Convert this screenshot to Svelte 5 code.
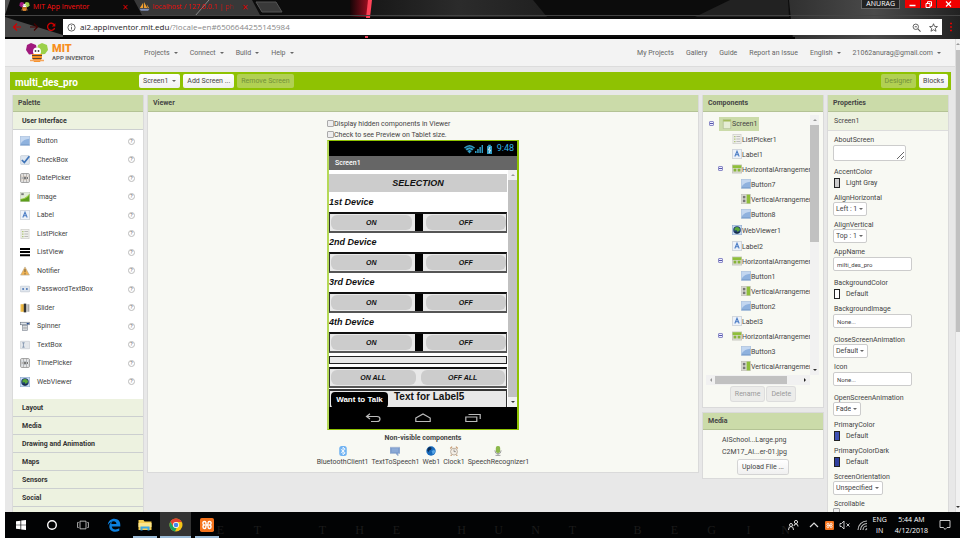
<script>
  const menus = ['Projects', 'Connect', 'Build', 'Help'];
  const links = ['My Projects', 'Gallery', 'Guide', 'Report an Issue'];
  const palette = [
    ['button', 'Button'], ['check', 'CheckBox'], ['date', 'DatePicker'], ['image', 'Image'],
    ['label', 'Label'], ['list', 'ListPicker'], ['listview', 'ListView'], ['notifier', 'Notifier'],
    ['password', 'PasswordTextBox'], ['slider', 'Slider'], ['spinner', 'Spinner'],
    ['textbox', 'TextBox'], ['time', 'TimePicker'], ['web', 'WebViewer']
  ];
  const drawers = ['Layout', 'Media', 'Drawing and Animation', 'Maps', 'Sensors', 'Social'];
  const tree = [
    ['list', 'ListPicker1', 1], ['label', 'Label1', 1], ['horiz', 'HorizontalArrangement1', 1, true],
    ['button', 'Button7', 2], ['vert', 'VerticalArrangement1', 2], ['button', 'Button8', 2],
    ['web', 'WebViewer1', 1], ['label', 'Label2', 1], ['horiz', 'HorizontalArrangement2', 1, true],
    ['button', 'Button1', 2], ['vert', 'VerticalArrangement2', 2], ['button', 'Button2', 2],
    ['label', 'Label3', 1], ['horiz', 'HorizontalArrangement3', 1, true],
    ['button', 'Button3', 2], ['vert', 'VerticalArrangement3', 2], ['button', '', 2]
  ];
  const props = [
    { name: 'AboutScreen', kind: 'area' },
    { name: 'AccentColor', kind: 'color', value: 'Light Gray', color: '#cccccc' },
    { name: 'AlignHorizontal', kind: 'select', value: 'Left : 1' },
    { name: 'AlignVertical', kind: 'select', value: 'Top : 1' },
    { name: 'AppName', kind: 'input', value: 'milti_des_pro' },
    { name: 'BackgroundColor', kind: 'color', value: 'Default', color: '#ffffff' },
    { name: 'BackgroundImage', kind: 'input', value: 'None...' },
    { name: 'CloseScreenAnimation', kind: 'select', value: 'Default' },
    { name: 'Icon', kind: 'input', value: 'None...' },
    { name: 'OpenScreenAnimation', kind: 'select', value: 'Fade' },
    { name: 'PrimaryColor', kind: 'color', value: 'Default', color: '#3f51b5' },
    { name: 'PrimaryColorDark', kind: 'color', value: 'Default', color: '#303f9f' },
    { name: 'ScreenOrientation', kind: 'select', value: 'Unspecified' },
    { name: 'Scrollable', kind: 'check' }
  ];
  const devices = ['1st Device', '2nd Device', '3rd Device', '4th Device'];
  const hidden = [
    ['bluetooth', 'BluetoothClient1'], ['speech', 'TextToSpeech1'], ['globe', 'Web1'],
    ['clock', 'Clock1'], ['mic', 'SpeechRecognizer1']
  ];
  const motto = 'ET THE HUNT BEGIN'.split('');
</script>

{#snippet icon(name)}
  <svg class="icon" viewBox="0 0 16 16" aria-hidden="true">
    {#if name === 'button'}
      <rect x=".5" y="1" width="15" height="14" fill="#8fb2de" stroke="#a9bfdc" />
      <path d="M1 1.5h14v3Q6 5 1 12z" fill="#c3d7f0" />
      <path d="M1 14h14" stroke="#6e93c4" />
    {:else if name === 'check'}
      <rect x="1" y="1" width="14" height="14" rx="1" fill="#dfe7f0" stroke="#b9c3cf" />
      <path d="M3 8l4 4 8-10" fill="none" stroke="#3f74b8" stroke-width="2.8" />
    {:else if name === 'date' || name === 'time'}
      <rect x="1" y="1" width="14" height="14" rx="1.5" fill="#eeeeee" stroke="#8c8c8c" stroke-width="1.4" />
      <path d="M5.5 1v14M10.500 1v14" stroke="#999" />
      <path d="M2 5h12M2 11h12" stroke={name === 'date' ? '#c0a080' : '#9ab'} stroke-dasharray="2 1.500" />
      <path d="M2.500 8h2M7 6.500h2v3H7zM12 6.500v3" fill="none" stroke="#555" stroke-width="1.300" />
    {:else if name === 'image'}
      <rect x=".5" y="1" width="15" height="14" fill="#e3edd8" stroke="#c5cdbd" />
      <path d="M1 15V11Q9 11 15 3v12z" fill="#5d9e1c" />
      <path d="M1 12Q9 12 15 5V3Q9 10 1 11z" fill="#a5d34d" />
      <rect x="2" y="2" width="4" height="3" fill="#777" />
    {:else if name === 'label'}
      <rect x=".5" y=".5" width="15" height="15" rx="1" fill="#edf2f9" stroke="#b6bcc6" />
      <path d="M4.500 12L8 3.500 11.500 12M5.800 9.200h4.400" fill="none" stroke="#4a7cc4" stroke-width="1.700" />
    {:else if name === 'list'}
      <rect x="1.500" y=".5" width="13" height="15" fill="#efefec" stroke="#c9c9c5" />
      <path d="M3.500 4h2M3.500 8h2M3.500 12h2" stroke="#a3bd62" stroke-width="2" />
      <path d="M7 4h6M7 8h6M7 12h6" stroke="#aaa" stroke-width="1.200" />
    {:else if name === 'listview'}
      <path d="M0 3h16M0 8h16M0 13h16" stroke="#000" stroke-width="3.200" />
    {:else if name === 'notifier'}
      <path d="M8 1.500L15 14.500H1z" fill="#f2b454" stroke="#b9aa90" />
      <path d="M8 5v5M8 11.500v2" stroke="#6b5a3c" stroke-width="1.600" />
    {:else if name === 'password'}
      <rect x=".5" y="3.500" width="15" height="9" rx="1" fill="#e0e6ee" stroke="#bcc4cf" />
      <circle cx="5" cy="8" r="1.600" fill="#4f78b5" /><circle cx="11" cy="8" r="1.600" fill="#4f78b5" />
    {:else if name === 'slider'}
      <rect x="1" y="2" width="5" height="12" fill="#e7a91c" />
      <rect x="6" y="1" width="4" height="14" fill="#333" />
      <rect x="10" y="2" width="5" height="12" fill="#aaa" />
      <path d="M3 2v12M12 2v12" stroke="#ffffff88" />
    {:else if name === 'spinner'}
      <rect x="1" y="2" width="14" height="4" fill="#dde3ea" stroke="#6a7480" />
      <rect x="4" y="7" width="8" height="8" fill="#e6eaee" stroke="#7a828c" />
      <path d="M10 3h5l-2.500 3z" fill="#244a90" /><path d="M5 10h6M5 12.500h6" stroke="#888" />
    {:else if name === 'textbox'}
      <rect x=".5" y="2" width="15" height="12" rx="1" fill="#e4e7eb" stroke="#c2c7ce" />
      <path d="M3.500 4.500h4M3.500 11.500h4M5.500 4.500v7" stroke="#5f7898" />
    {:else if name === 'web'}
      <rect x=".5" y=".5" width="15" height="15" fill="#c8dcf3" stroke="#8faacc" />
      <circle cx="8" cy="8" r="6" fill="#1d3d70" />
      <path d="M4 5q4-4 8 0l1 3-4 3-2-3-3 1z" fill="#59a83a" />
      <path d="M5 12q3 2 6 0" stroke="#111" fill="none" />
    {:else if name === 'horiz'}
      <rect x=".5" y="1.500" width="15" height="13" fill="#dcdcd4" stroke="#bdbdb4" />
      <rect x="1" y="2" width="14" height="4.500" fill="#8fbf3a" />
      <rect x="2.500" y="7.500" width="4.500" height="4.500" fill="#87b438" /><rect x="9" y="7.500" width="4.500" height="4.500" fill="#87b438" />
    {:else if name === 'vert'}
      <rect x="1" y=".5" width="14" height="15" fill="#dcdcd4" stroke="#bdbdb4" />
      <rect x="9" y="1" width="5.500" height="14" fill="#8fbf3a" />
      <rect x="3" y="3" width="4" height="4" fill="#777" /><rect x="3" y="9" width="4" height="4" fill="#777" />
    {:else if name === 'screen'}
      <rect x="2" y=".5" width="12" height="15" rx="1" fill="#e6edd5" stroke="#a9b78a" />
      <rect x="2" y="1" width="12" height="3" fill="#a3bb5b" />
    {:else if name === 'bluetooth'}
      <rect x="2" y="0" width="12" height="16" rx="4" fill="#6fb2f2" />
      <path d="M4.500 5l7 6L8 14V2l3.500 3-7 6" fill="none" stroke="#fff" stroke-width="1.400" />
    {:else if name === 'speech'}
      <path d="M0 2h16v10h-3v4l-4-4H0z" fill="#7f9fcf" stroke="#a8b8d0" />
      <path d="M3 5h10M3 8h10" stroke="#a9c0e4" />
    {:else if name === 'globe'}
      <circle cx="8" cy="8" r="7.500" fill="#1769bb" />
      <path d="M3 3q4-3 6 0l-1 3-3 1-1 3-2-3z" fill="#0b2d56" /><path d="M9 8l4-2 2 3-4 5z" fill="#59a6e6" />
    {:else if name === 'clock'}
      <circle cx="8" cy="9" r="5.500" fill="#f4eee5" stroke="#b8aa9a" stroke-width="1.500" />
      <path d="M2 4l3-3M11 1l3 3M4 14l-1 2M12 14l1 2" stroke="#c79b73" stroke-width="2" />
      <path d="M8 5.500V9h3" fill="none" stroke="#666" />
    {:else if name === 'mic'}
      <rect x="4.500" y="0" width="7" height="11" rx="3" fill="#8cb84b" />
      <path d="M3 7q0 5.500 5 5.500t5-5.500M8 12v3M4 15h8" fill="none" stroke="#999" stroke-width="1.500" />
    {/if}
  </svg>
{/snippet}

{#snippet bee()}
  <svg viewBox="0 0 24 22" aria-hidden="true">
    <path d="M6 1l5 2 1 5-3 4-5 .5L1 8l1-5z" fill="#a0197d" />
    <path d="M17 1l5 2 1 5-3 4-5 .5L12 8l1-5z" fill="#9bd04a" />
    <circle cx="12" cy="9.500" r="4" fill="#fff" />
    <circle cx="10.500" cy="9" r=".9" fill="#444" /><circle cx="13.500" cy="9" r=".9" fill="#444" />
    <path d="M7 12h10v4l-2 4h-6l-2-4z" fill="#f78f1e" />
    <path d="M7 13.500h10M7.500 16.500h9" stroke="#5a4634" stroke-width="1.100" />
    <path d="M5 18.500l14 0" stroke="#f5a55c" stroke-width="1.500" />
  </svg>
{/snippet}

{#snippet xampp()}
  <svg class="xampp" viewBox="0 0 16 16" aria-hidden="true">
    <rect width="16" height="16" rx="2" fill="#f5731c" />
    <path d="M5.500 8C2.500 8 2.800 4 5 4S6.800 5.500 6.800 8 7 12 5 12 2.500 8 5.500 8zM10.500 8C13.500 8 13.200 4 11 4S9.200 5.500 9.200 8 9 12 11 12 13.500 8 10.500 8zM6.500 8h3" fill="none" stroke="#fff" stroke-width="1.600" />
  </svg>
{/snippet}

<div class="desktop">
  <div class="browser">
    <svg class="theme" viewBox="0 0 955 39" preserveAspectRatio="none" aria-hidden="true">
      <defs>
        <linearGradient id="glow"><stop offset="0" stop-color="#120506" /><stop offset="1" stop-color="#a80f22" /></linearGradient>
        <linearGradient id="steel"><stop offset="0" stop-color="#181818" /><stop offset=".5" stop-color="#2b2b2b" /><stop offset="1" stop-color="#202020" /></linearGradient>
        <linearGradient id="right"><stop offset="0" stop-color="#303030" /><stop offset=".5" stop-color="#4a4a4a" /><stop offset="1" stop-color="#222" /></linearGradient>
      </defs>
      <rect width="955" height="39" fill="#0c0c0c" />
      <path d="M345 0h20v17h-20z" fill="url(#glow)" />
      <path d="M366 0h162l14 17H366z" fill="url(#steel)" />
      <path d="M725 0h58l1 17H690z" fill="#222" />
      <path d="M784 0h171v39H788z" fill="url(#right)" />
      <path d="M363 0h4l-2 18h-4z" fill="#ff4358" />
      <path d="M0 17l58 18v4H0z" fill="#4a4a4a" />
      <path d="M0 0h5L0 15z" fill="#555" />
      <path d="M129 0h118l8 15H137z" fill="#383838" />
      <path d="M204 0L190 16" stroke="#888" />
      <path d="M251 2h20l6 10h-20z" fill="#393939" stroke="#555" />
      <path d="M0 15.500h955" stroke="#444" />
      <path d="M0 38h790" stroke="#000" stroke-width="2" />
      <path d="M360 36h3v2h-3z" fill="#e8445a" />
    </svg>
    <div class="tabs">
      <div class="tab first">
        <span class="fav">{@render bee()}</span><span class="title">MIT App Inventor</span>
        <button aria-label="Close tab">×</button>
      </div>
      <div class="tab">
        <span class="fav"><svg viewBox="0 0 24 22" aria-hidden="true"><path d="M2 14L9 3v11zM11 14V1l7 13zM19 14l-2-8 5 8z" fill="#f0a030" /><path d="M1 16h22l-3 4H4z" fill="#8090b8" /></svg></span>
        <span class="title faded">localhost / 127.0.0.1 | ph</span>
        <button aria-label="Close tab">×</button>
      </div>
      <div class="controls">
        <span class="user">ANURAG</span>
        <button aria-label="Minimize"><svg viewBox="0 0 14 7"><path d="M4 4.500h6" stroke="#fff" stroke-width="1.500" /></svg></button>
        <button aria-label="Restore"><svg viewBox="0 0 14 7"><path d="M4.500 2.500h4v4h-4zM6 2.500V.7h4V5H8.500" fill="none" stroke="#fff" /></svg></button>
        <button class="close" aria-label="Close"><svg viewBox="0 0 14 7"><path d="M4.500.5l5 5M9.500.5l-5 5" stroke="#fff" stroke-width="1.200" /></svg></button>
      </div>
    </div>
    <div class="toolbar">
      <button class="nav" aria-label="Back"><svg viewBox="0 0 10 10"><path d="M9 5H1.500M5 1.500L1.500 5 5 8.500" fill="none" stroke="#d00000" stroke-width="1.200" /></svg></button>
      <button class="nav dim" aria-label="Forward"><svg viewBox="0 0 10 10"><path d="M1 5h7.500M5 1.500L8.500 5 5 8.500" fill="none" stroke="#400" stroke-width="1.200" /></svg></button>
      <button class="nav" aria-label="Reload"><svg viewBox="0 0 10 10"><path d="M8.300 3A3.600 3.600 0 1 0 8.600 6" fill="none" stroke="#d00000" stroke-width="1.300" /><path d="M9.300 1v3.500H5.800z" fill="#d00000" /></svg></button>
      <div class="omnibox">
        <svg viewBox="0 0 10 10"><circle cx="5" cy="5" r="4" fill="none" stroke="#555" /><path d="M5 4.300v3M5 2.500v1" stroke="#555" /></svg>
        <span class="url">ai2.appinventor.mit.edu<span>/?locale=en#6506644255145984</span></span>
        <svg viewBox="0 0 10 10"><circle cx="4.200" cy="4.200" r="3" fill="none" stroke="#555" /><path d="M6.500 6.500L9.500 9.500M3 4.200h2.400" stroke="#555" stroke-width="1.200" /></svg>
        <svg viewBox="0 0 10 10"><path d="M5 .8l1.200 3 3.200.2L7 6l.8 3.200L5 7.500 2.200 9.200 3 6 .6 4l3.200-.2z" fill="none" stroke="#444" stroke-width=".9" /></svg>
      </div>
      <button class="more" aria-label="Menu"><svg viewBox="0 0 4 10"><path d="M1 1.500h2M1 5h2M1 8.500h2" stroke="#e00000" stroke-width="1.500" /></svg></button>
    </div>
  </div>

  <div class="page">
    <div class="site">
      <header>
        <a class="logo" href="#home">{@render bee()}<span><b>MIT</b><small>APP INVENTOR</small></span></a>
        <nav class="menus">
          {#each menus as m}<a href="#menu">{m}<i class="caret"></i></a>{/each}
        </nav>
        <nav class="account">
          {#each links as l}<a href="#link">{l}</a>{/each}
          <a href="#lang">English<i class="caret"></i></a>
          <a href="#me">21062anurag@gmail.com<i class="caret"></i></a>
        </nav>
      </header>

      <div class="projectbar">
        <h1>multi_des_pro</h1>
        <button>Screen1<i class="caret"></i></button>
        <button>Add Screen ...</button>
        <button disabled>Remove Screen</button>
        <span class="grow"></span>
        <button disabled>Designer</button>
        <button>Blocks</button>
      </div>

      <main>
        <section class="panel palette">
          <h2>Palette</h2>
          <h3>User Interface</h3>
          <ul>
            {#each palette as [ic, name]}
              <li>{@render icon(ic)}<span>{name}</span><button class="help" aria-label="Help">?</button></li>
            {/each}
          </ul>
          {#each drawers as d}<h3>{d}</h3>{/each}
          <div class="drawer-end"></div>
        </section>

        <section class="panel viewer">
          <h2>Viewer</h2>
          <div class="stage">
            <div class="options">
              <label><input type="checkbox" />Display hidden components in Viewer</label>
              <label><input type="checkbox" />Check to see Preview on Tablet size.</label>
            </div>
            <div class="phone">
              <div class="status">
                <svg viewBox="0 0 30 10" aria-hidden="true">
                  <path d="M0 3.500Q5.500-1.500 11 3.500L5.500 9.500z" fill="#2f9cc5" />
                  <path d="M1 5Q5.500 1 10 5M2.500 7Q5.500 4 8.500 7" fill="none" stroke="#000" stroke-width=".7" />
                  <path d="M11 9h1.500V7H11zM13.200 9h1.500V5h-1.500zM15.400 9h1.500V3h-1.500zM17.600 9H19V1h-1.400z" fill="#2f9cc5" />
                  <path d="M23 2h1.200V.8h2.600V2H28v8h-5z" fill="#2f9cc5" /><path d="M26 3l-1.500 3h2L25 9" fill="none" stroke="#fff" stroke-width=".8" />
                </svg>
                <span>9:48</span>
              </div>
              <div class="apptitle">Screen1</div>
              <div class="screen">
                <div class="app">
                  <button class="wide">SELECTION</button>
                  {#each devices as d}
                    <p>{d}</p>
                    <div class="pair"><button>ON</button><i></i><button>OFF</button></div>
                  {/each}
                  <div class="thin"></div>
                  <div class="pair all"><button>ON ALL</button><button>OFF ALL</button></div>
                  <div class="talk"><button>Want to Talk</button><span>Text for Label5</span></div>
                </div>
                <div class="vscroll"><i class="up"></i><b></b><i class="down"></i></div>
              </div>
              <div class="softkeys">
                <svg viewBox="0 0 16 10"><path d="M5 .8L1.500 3.500 5 6M1.500 3.500H12q3 0 3 2.500T12 8.500H6" fill="none" stroke="#bbb" stroke-width="1.200" /></svg>
                <svg viewBox="0 0 16 10"><path d="M.8 5L8 1l7.200 4v3.500H.8z" fill="none" stroke="#bbb" stroke-width="1.200" /></svg>
                <svg viewBox="0 0 16 10"><path d="M.8 4h11v4.500H.8zM3.500 1.500h11.700v4.500" fill="none" stroke="#bbb" stroke-width="1.200" /></svg>
              </div>
            </div>
            <h4>Non-visible components</h4>
            <div class="hidden">
              {#each hidden as [ic, name]}<span>{@render icon(ic)}{name}</span>{/each}
            </div>
          </div>
        </section>

        <div class="stack">
          <section class="panel">
            <h2>Components</h2>
            <div class="treebox">
              <div class="tree">
                <div class="node root"><i class="fold"></i><span class="chosen">{@render icon('screen')}Screen1</span></div>
                {#each tree as [ic, name, depth, fold]}
                  <div class={['node', `d${depth}`, ic === 'web' && 'tall']}>
                    {#if fold}<i class="fold"></i>{/if}{@render icon(ic)}<span>{name}</span>
                  </div>
                {/each}
              </div>
              <div class="vscroll"><i class="up"></i><b></b><i class="down"></i></div>
              <div class="hscroll"><i class="left"></i><b></b><i class="right"></i></div>
            </div>
            <div class="actions"><button disabled>Rename</button><button disabled>Delete</button></div>
          </section>
          <section class="panel media">
            <h2>Media</h2>
            <a href="#large">AISchool...Large.png</a>
            <a href="#er">C2M17_AI...er-01.jpg</a>
            <div class="actions"><button>Upload File ...</button></div>
          </section>
        </div>

        <section class="panel properties">
          <h2>Properties</h2>
          <div class="subject">Screen1</div>
          <div class="fields">
            {#each props as p}
              <div class={['field', p.kind]}>
                <label for={p.name}>{p.name}</label>
                {#if p.kind === 'area'}
                  <textarea id={p.name}></textarea>
                {:else if p.kind === 'color'}
                  <button id={p.name}><i style="background:{p.color}"></i>{p.value}</button>
                {:else if p.kind === 'select'}
                  <span class="pick"><select id={p.name}><option>{p.value}</option></select><i class="caret"></i></span>
                {:else if p.kind === 'input'}
                  <input id={p.name} value={p.value} />
                {:else}
                  <input id={p.name} type="checkbox" checked />
                {/if}
              </div>
            {/each}
          </div>
        </section>
      </main>
    </div>
    <div class="vscroll pagescroll"><i class="up"></i><b></b><i class="down"></i></div>
  </div>

  <footer>
    <div class="motto" aria-hidden="true">{#each motto as ch}<span class:space={ch === ' '}>{ch}</span>{/each}</div>
    <button aria-label="Start"><svg viewBox="0 0 12 12"><path d="M1 2.300l4.500-.6v4H1zM6.200 1.600L11 1v4.700H6.200zM1 6.300h4.500v4L1 9.700zM6.200 6.300H11V11l-4.800-.6z" fill="#fff" /></svg></button>
    <button aria-label="Cortana"><svg viewBox="0 0 12 12"><circle cx="6" cy="6" r="4.300" fill="none" stroke="#fff" stroke-width="1.400" /></svg></button>
    <button aria-label="Task view"><svg viewBox="0 0 14 12"><path d="M3.500 1.500h7v9h-7zM2 3H.7v6H2M12 3h1.300v6H12" fill="none" stroke="#ccc" /></svg></button>
    <button aria-label="Edge"><svg class="big" viewBox="0 0 14 14"><path d="M.8 7C1.200 3 4 .8 7.300.8c4 0 6 2.800 6 6.200v1.500H4.800c.2 3.500 4.700 3.500 7.500 1.800v2.500c-4 2-10 1-10-4.300 0-2.500 1.200-4 2.900-4.800-.7.900-.8 2-.8 2.300h5C9.500 2 4 2.500.8 7z" fill="#0c80df" /></svg></button>
    <button class="open" aria-label="File Explorer"><svg class="big" viewBox="0 0 14 14"><path d="M.5 2h5l1 1.500h7v8.500H.5z" fill="#f6cf52" /><path d="M.5 5h13v4H.5z" fill="#fde58b" /><path d="M2.500 12.500V8.500h9v4h-2v-2h-5v2z" fill="#3ba7e5" /></svg></button>
    <button class="open active" aria-label="Chrome"><svg class="big" viewBox="0 0 14 14"><circle cx="7" cy="7" r="6.500" fill="#f6c417" /><path d="M1.400 3.700A6.500 6.500 0 0 1 12.700 4H7L4 8z" fill="#df4132" /><path d="M1.400 3.700L4.500 9 7.500 10 6 13.400A6.500 6.500 0 0 1 1.400 3.700z" fill="#1aa15f" /><circle cx="7" cy="7" r="3" fill="#fff" /><circle cx="7" cy="7" r="2.300" fill="#4485ec" /></svg></button>
    <button class="open" aria-label="XAMPP">{@render xampp()}</button>
    <div class="tray">
      <svg viewBox="0 0 12 12"><circle cx="4" cy="6" r="1.500" fill="none" stroke="#ddd" /><path d="M1.500 11q0-3.500 2.500-3.500T6.500 11M7 7q0-2 2-2t2 2.500" fill="none" stroke="#ddd" /><circle cx="9" cy="3" r="1.600" fill="none" stroke="#ddd" /></svg>
      <svg class="chev" viewBox="0 0 12 12"><path d="M2 8l4-4 4 4" fill="none" stroke="#ddd" stroke-width="1.200" /></svg>
      {@render xampp()}
      <svg viewBox="0 0 12 12"><path d="M1 4.500h1.500L5 2v8L2.500 7.500H1zM7.500 4.500l3 3M10.500 4.500l-3 3" fill="none" stroke="#ddd" stroke-width=".9" /></svg>
      <svg viewBox="0 0 12 12"><path d="M2 11A9 9 0 0 1 11 2M4.500 11A6.500 6.500 0 0 1 11 4.500M7 11A4 4 0 0 1 11 7M9.500 11L11 9.500" fill="none" stroke="#bbb" stroke-width="1.100" /></svg>
      <span>ENG<br />IN</span>
      <span class="time">5:44 AM<br />4/12/2018</span>
      <svg class="note" viewBox="0 0 12 12"><path d="M1 1.500h10v7H8L6 10.500 4.500 8.500H1z" fill="none" stroke="#ddd" stroke-width=".9" /></svg>
    </div>
  </footer>
</div>

<style>
  :global(body) { background: #fff; overflow: hidden; }
  .desktop { box-sizing: border-box; height: 100vh; padding: 0 0 2px 5px; display: flex; flex-direction: column; font: 7px/10px Roboto, "Liberation Sans", sans-serif; color: #444; }
  .desktop :is(button, input, select, textarea) { font: inherit; color: inherit; margin: 0; padding: 0; box-sizing: border-box; }
  .desktop button { border: 0; background: none; white-space: nowrap; }
  .desktop a { color: inherit; text-decoration: none; white-space: nowrap; }
  svg { display: block; flex: none; }
  h1, h2, h3, h4, p, ul { margin: 0; padding: 0; list-style: none; font-size: inherit; }
  .icon { width: 10px; height: 10px; }
  .caret { display: inline-block; width: 0; border: 2px solid transparent; border-top-color: #666; border-bottom: 0; margin-left: 4px; vertical-align: middle; }

  .browser { position: relative; height: 39px; flex: none; font-family: "Open Sans", sans-serif; }
  .theme { position: absolute; inset: 0; width: 100%; height: 100%; }
  .tabs { position: relative; display: flex; height: 16px; }
  .tab { display: flex; align-items: center; height: 13px; width: 121px; padding-left: 2px; box-sizing: border-box; color: #ff1010; }
  .tab.first { width: 132px; padding-left: 14px; }
  .tab .title { width: 86px; overflow: hidden; white-space: nowrap; }
  .faded { mask-image: linear-gradient(90deg, #000 80%, transparent); }
  .fav svg { width: 11px; height: 11px; }
  .fav { width: 14px; }
  .tab button { font-size: 10px; color: #d00; width: 12px; }
  .controls { margin-left: auto; display: flex; gap: 1px; align-items: flex-start; }
  .user { color: #fff; height: 9px; line-height: 8px; border: 1px solid #666; border-top: 0; box-sizing: border-box; background: #222; padding: 0 4px; margin-right: 4px; }
  .controls button { background: #f00000; width: 15px; height: 8px; }
  .controls svg { width: 100%; height: 7px; }
  .controls .close { width: 23px; }
  .toolbar { position: relative; display: flex; align-items: center; height: 22px; padding-left: 7px; gap: 7px; }
  .nav svg { width: 10px; height: 10px; }
  .omnibox { flex: 1; height: 16px; background: #fff; display: flex; align-items: center; padding: 0 4px; }
  .omnibox svg { width: 9px; height: 9px; margin-right: 4px; }
  .omnibox svg:last-child { margin: 0 0 0 4px; }
  .url { flex: 1; font-size: 8px; line-height: 16px; color: #222; }
  .url span { color: #888; }
  .more { width: 11px; }
  .more svg { width: 4px; height: 10px; }

  .page { flex: 1; min-height: 0; display: flex; background: #e8e8e8; }
  .site { flex: 1; min-width: 0; display: flex; flex-direction: column; }
  header { height: 27px; flex: none; display: flex; align-items: center; background: #f3f3f3; border-bottom: 1px solid #dcdcdc; padding: 0 14px 0 20px; color: #666; }
  .logo { display: flex; align-items: center; width: 119px; }
  .logo > :global(svg) { width: 24px; height: 22px; }
  .logo span { display: flex; flex-direction: column; margin-left: 3px; }
  .logo b { font-size: 11px; line-height: 10px; font-weight: 900; color: #f78f1e; }
  .logo small { font-size: 6px; line-height: 8px; font-weight: 700; color: #666; }
  .menus { display: flex; gap: 12px; }
  .account { display: flex; gap: 12px; margin-left: auto; }
  .projectbar { flex: none; display: flex; align-items: center; gap: 3px; height: 18px; margin: 5px 4px 5px 5px; padding: 0 3px 0 5px; background: #8fc202; }
  h1 { width: 121px; font-size: 10px; line-height: 14px; padding-top: 3px; color: #fff; }
  .projectbar button, .actions button { height: 14px; padding: 0 4px; border-radius: 2px; background: linear-gradient(#fff, #f0f0f0); }
  .projectbar button:disabled { background: #b1d053; color: #73913a; }
  .grow { flex: 1; }

  main { flex: 1; min-height: 0; display: flex; align-items: flex-start; gap: 5px; padding: 0 7px 0 8px; overflow: hidden; }
  .panel { background: #f8f9f3; box-sizing: border-box; box-shadow: 0 0 0 1px #dadada; }
  h2 { height: 17px; line-height: 17px; background: #cbdba9; border-bottom: 1px solid #b4c395; box-sizing: border-box; padding-left: 5px; font-weight: 700; }
  .palette { width: 130px; flex: none; }
  h3 { height: 18px; line-height: 18px; box-sizing: border-box; padding-left: 9px; background: #edf2e0; border-bottom: 1px solid #cccfd0; font-weight: 700; color: #333; }
  .drawer-end { height: 18px; background: #edf2e0; }
  .palette ul { display: grid; grid-auto-rows: 1fr; height: 259px; padding: 2px 8px 8px 7px; background: #fff; }
  .palette li { display: flex; align-items: center; gap: 7px; }
  .palette li span { flex: 1; }
  .desktop .help { width: 7px; height: 7px; border: 1px solid #bbb; border-radius: 50%; font-size: 5px; line-height: 5px; color: #555; }

  .viewer { flex: 1; }
  .stage { display: flex; flex-direction: column; align-items: center; padding: 6px 0 5px; }
  .options { width: 192px; }
  .options label { display: flex; align-items: center; height: 11px; }
  input[type="checkbox"] { appearance: none; width: 7px; height: 7px; border: 1px solid #aaa; border-radius: 1px; background: #eee; }
  .phone { width: 192px; box-sizing: border-box; border: 2px solid #8fc202; border-left-color: #b5d957; border-width: 1px 2px; background: #000; font-family: "Liberation Sans", sans-serif; }
  .status { height: 15px; display: flex; align-items: center; justify-content: flex-end; gap: 3px; padding-right: 3px; color: #33b5e5; font: 9px/15px Roboto, sans-serif; }
  .status svg { width: 30px; height: 10px; }
  .apptitle { height: 14px; line-height: 14px; padding-left: 6px; background: #666; color: #fff; font-family: Roboto, sans-serif; font-weight: 500; }
  .screen { display: flex; height: 237px; background: #fff; }
  .app { flex: 1; overflow: hidden; display: flex; flex-direction: column; color: #111; font-weight: 700; }
  .app button { background: #ccc; font-style: italic; }
  .app .wide { height: 18px; margin: 4px 1px 1px 0; flex: none; font-size: 9px; }
  .app p { height: 19px; flex: none; line-height: 19px; font-size: 9px; font-style: italic; }
  .pair { flex: none; height: 21px; box-sizing: border-box; border: 2px solid #222; border-color: #111 #555 #555 #333; border-width: 2px 1px; background: #e8e8e8; display: flex; gap: 3px; padding: 1px 0 1px 1px; margin-right: 1px; }
  .app .pair button { flex: 1; border-radius: 6px; }
  .pair i { width: 8px; margin: -1px 0; background: #000; }
  .pair.all { margin-top: 3px; gap: 5px; padding-right: 1px; }
  .thin { flex: none; height: 8px; margin: 3px 1px 0 0; box-sizing: border-box; border: 1px solid #222; background: #e8e8e8; }
  .talk { flex: none; height: 24px; margin: 1px 1px 0 0; box-sizing: border-box; border: 1px solid #333; border-top-width: 2px; background: #e8e8e8; display: flex; align-items: flex-start; gap: 6px; padding: 1px; }
  .app .talk button { background: #000; color: #fff; font-style: normal; font-size: 8px; height: 16px; width: 57px; border-radius: 4px; }
  .talk span { font-size: 10px; line-height: 10px; }
  .softkeys { height: 22px; display: flex; justify-content: center; align-items: center; gap: 34px; }
  .softkeys svg { width: 16px; height: 10px; }
  h4 { line-height: 16px; font-weight: 700; }
  .hidden { display: flex; gap: 3px; }
  .hidden span { display: flex; flex-direction: column; align-items: center; gap: 1px; }

  .vscroll { width: 9px; background: #f1f1f1; display: flex; flex-direction: column; align-items: center; padding: 4px 0; box-sizing: border-box; }
  .vscroll b { width: 100%; background: #c1c1c1; flex: 1; margin: 4px 0; }
  .vscroll .up, .vscroll .down { border: 2px solid transparent; border-top: 0; border-bottom-color: #999; }
  .vscroll .down { border: 2px solid transparent; border-bottom: 0; border-top-color: #333; margin-top: auto; }
  .pagescroll { width: 5px; border-left: 1px solid #ddd; }
  .pagescroll b { flex: 0 0 282px; margin: 5px 0; }

  .stack { width: 120px; flex: none; display: flex; flex-direction: column; gap: 6px; }
  .treebox { display: grid; grid-template-columns: minmax(0, 1fr) 9px; margin: 3px 4px 0 3px; }
  .tree { height: 260px; overflow: hidden; padding-top: 1px; box-sizing: border-box; }
  .node { display: flex; align-items: center; height: 15px; white-space: nowrap; }
  .node.tall { height: 17px; }
  .node.d1 { padding-left: 26px; }
  .node.d2 { padding-left: 35px; }
  .node:has(.fold) { padding-left: 12px; }
  .node.root { padding-left: 3px; }
  .node > span { padding-top: 3px; }
  .fold { width: 5px; height: 5px; box-sizing: border-box; border: 1px solid #8d8dc8; border-radius: 1px; background: linear-gradient(#55a, #55a) center / 3px 1px no-repeat #eef; margin-right: 9px; flex: none; }
  .node.root .fold { margin-right: 5px; }
  .node .chosen { display: flex; align-items: center; height: 14px; padding: 0 2px 0 3px; background: #cbdba9; }
  .treebox .vscroll b { flex: 0 0 117px; }
  .hscroll { height: 10px; display: flex; align-items: center; background: #f1f1f1; padding: 0 4px; }
  .hscroll b { height: 8px; flex: 0 0 72px; background: #c1c1c1; margin: 0 3px; }
  .hscroll i { border: 2px solid transparent; border-left: 0; border-right-color: #999; }
  .hscroll .right { border: 2px solid transparent; border-right: 0; border-left-color: #222; margin-left: auto; }
  .actions { display: flex; justify-content: center; gap: 3px; padding: 2px 0 6px; }
  .actions button { box-shadow: 0 0 0 1px #d4d4d4; padding: 0 4px; }
  .actions button:disabled { background: #ececea; color: #999; box-shadow: 0 0 0 1px #ddd; }
  .media a { display: block; padding-left: 19px; line-height: 12px; }
  .media h2 { margin-bottom: 4px; }
  .media .actions { padding: 2px 0 4px; }

  .properties { width: 120px; flex: none; }
  .subject { height: 19px; line-height: 19px; padding-left: 6px; background: #edf2e0; border-bottom: 1px solid #dcdcdc; box-sizing: border-box; }
  .fields { padding: 5px 5px 0; }
  .field { height: 27px; }
  .field label { display: block; line-height: 9px; height: 8px; padding-left: 1px; }
  .field.area { height: 32px; }
  .field.color { height: 26px; }
  .field.input { height: 31px; }
  .desktop textarea { display: block; width: 73px; height: 16px; margin-top: 1px; border: 1px solid #ccc; border-radius: 2px; background: #fff; resize: both; }
  .desktop .input input { display: block; width: 79px; height: 14px; margin-top: 1px; padding: 0 3px; border: 1px solid #ccc; border-radius: 2px; background: #fff; font-size: 6px; }
  .color button { display: flex; align-items: center; gap: 6px; height: 13px; padding: 0 1px; }
  .color i { width: 6px; height: 10px; box-sizing: border-box; border: 1px solid #222; }
  .pick { position: relative; display: inline-block; height: 14px; }
  .desktop select { display: block; appearance: none; field-sizing: content; height: 14px; border: 1px solid #ccc; border-radius: 2px; background: #fff; padding: 0 9px 0 2px; }
  .pick .caret { position: absolute; right: 4px; top: 6px; }

  footer { position: relative; flex: none; height: 26px; display: flex; background: #020304; color: #fff; font-family: "Open Sans", sans-serif; }
  footer button { width: 31px; display: flex; align-items: center; justify-content: center; }
  footer svg { width: 12px; height: 12px; }
  footer .big { width: 14px; height: 14px; }
  footer button .xampp { width: 14px; height: 14px; }
  footer .open { background: linear-gradient(#9cbcd8, #9cbcd8) bottom / 24px 2px no-repeat; }
  footer .active { background: linear-gradient(#9cbcd8, #9cbcd8) bottom / 31px 2px no-repeat #333; }
  .motto { position: absolute; left: 197px; bottom: 0; display: flex; font: 12px/16px "Liberation Serif", serif; color: #1b1b1b; }
  .motto span { width: 37px; text-align: center; }
  .motto .space { width: 28px; }
  .tray { position: relative; margin-left: auto; display: flex; align-items: center; gap: 5px; padding-right: 9px; }
  .tray .chev { margin-left: 4px; }
  .tray .xampp { width: 9px; height: 9px; }
  .tray span { text-align: center; line-height: 11px; }
  .tray .time { margin: 0 6px 0 3px; }
</style>
